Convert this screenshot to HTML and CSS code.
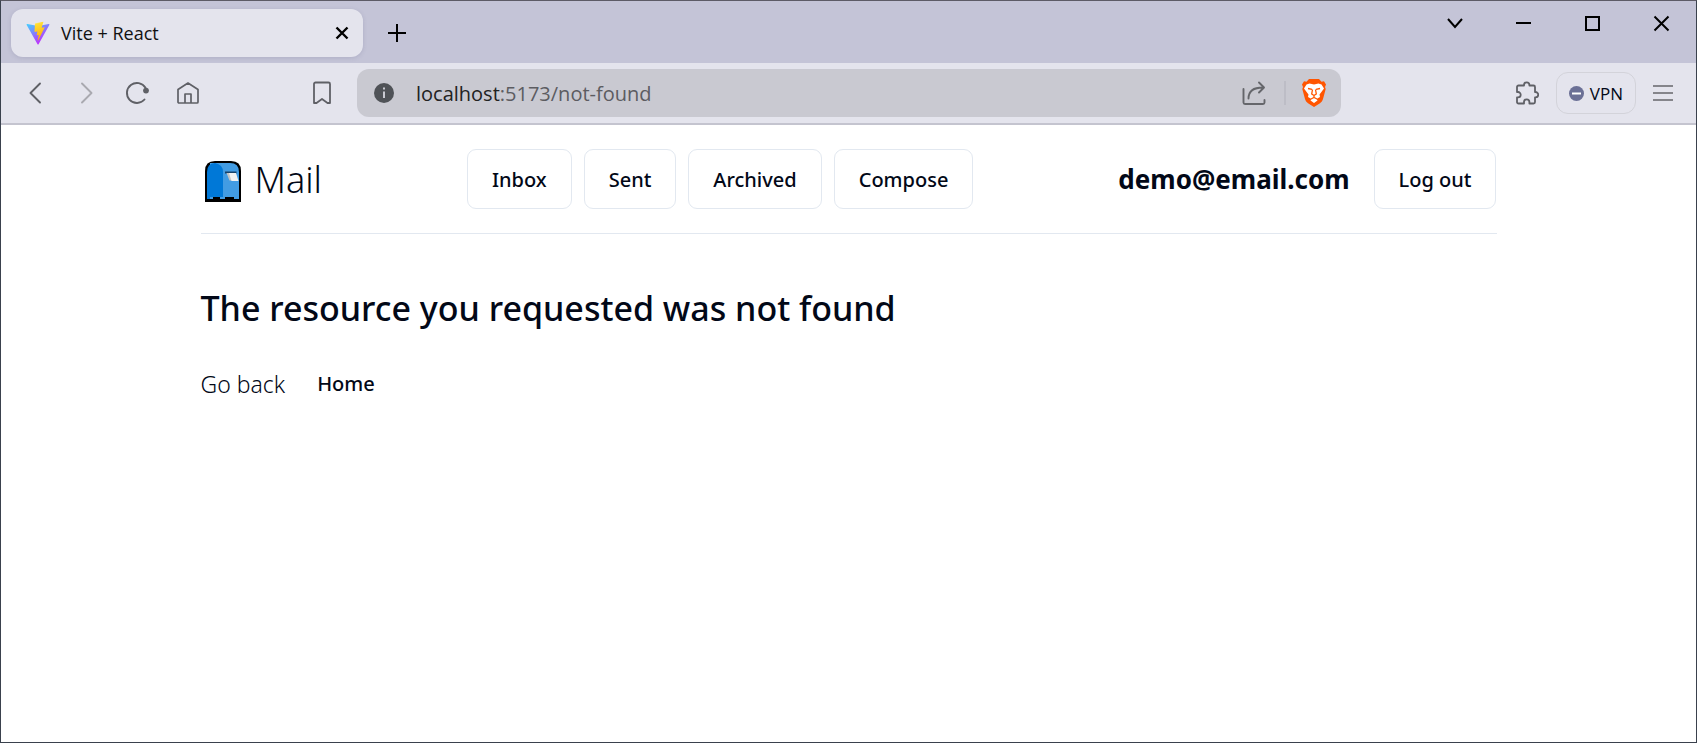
FILE: index.html
```html
<!DOCTYPE html>
<html lang="en">
<head>
<meta charset="utf-8">
<title>Vite + React</title>
<link rel="stylesheet" href="styles.css">
</head>
<body>
<div class="window">
  <div class="tabstrip">
    <div class="tab">
      <svg class="tab-icon" width="26" height="26" viewBox="0 0 32 32" aria-hidden="true">
        <defs>
          <linearGradient id="vite-a" x1="0" y1="0" x2="0.6" y2="0.9"><stop offset="0" stop-color="#41d1ff"/><stop offset="1" stop-color="#bd34fe"/></linearGradient>
          <linearGradient id="vite-b" x1="0.4" y1="0" x2="0.6" y2="1"><stop offset="0" stop-color="#ffea83"/><stop offset="0.1" stop-color="#ffdd35"/><stop offset="1" stop-color="#ffa800"/></linearGradient>
        </defs>
        <path fill="url(#vite-a)" d="M29.9 6.1 16.7 29.7a.7.7 0 0 1-1.3 0L2.1 6.1a.7.7 0 0 1 .8-1.1L16 7.4h.2L29.1 5a.7.7 0 0 1 .8 1.1z"/>
        <path fill="url(#vite-b)" d="M22.3 2 12.6 3.9a.4.4 0 0 0-.3.3l-.6 10.1c0 .2.2.4.4.4l2.7-.6c.3-.1.5.2.4.4l-.8 4c-.1.2.2.5.4.4l1.7-.5c.2-.1.5.1.4.4l-1.3 6.1c-.1.4.4.6.6.3l.1-.2 7.9-15.7c.1-.2-.1-.5-.4-.5l-2.8.6c-.2 0-.4-.2-.4-.5l2-6.3c0-.3-.2-.5-.5-.5z"/>
      </svg>
      <span class="tab-title">Vite + React</span>
      <button class="chrome-btn" type="button" aria-label="Close tab">
        <svg width="14" height="14" viewBox="0 0 14 14" fill="none" stroke="#000" stroke-width="2.4"><path d="M1.5 1.5l11 11M12.5 1.5l-11 11"/></svg>
      </button>
    </div>
    <button class="chrome-btn new-tab" type="button" aria-label="New tab">
      <svg width="20" height="20" viewBox="0 0 20 20" fill="none" stroke="#000" stroke-width="2"><path d="M10 1v18M1 10h18"/></svg>
    </button>
    <div class="window-controls">
      <button class="chrome-btn" type="button" aria-label="Search tabs"><svg width="17" height="17" viewBox="0 0 17 17" fill="none" stroke="#000" stroke-width="2"><path d="M2 4l7 8 7-8"/></svg></button>
      <button class="chrome-btn" type="button" aria-label="Minimize"><svg width="17" height="17" viewBox="0 0 17 17" fill="none" stroke="#000" stroke-width="2"><path d="M1 8h15"/></svg></button>
      <button class="chrome-btn" type="button" aria-label="Maximize"><svg width="17" height="17" viewBox="0 0 17 17" fill="none" stroke="#000" stroke-width="2"><path d="M2 2h13v13H2z"/></svg></button>
      <button class="chrome-btn" type="button" aria-label="Close window"><svg width="17" height="17" viewBox="0 0 17 17" fill="none" stroke="#000" stroke-width="2"><path d="M1.500 1.500l14 14M15.500 1.500l-14 14"/></svg></button>
    </div>
  </div>

  <div class="toolbar">
    <div class="nav-buttons">
      <button class="chrome-btn" type="button" aria-label="Back"><svg width="24" height="24" viewBox="0 0 24 24" fill="none" stroke="#5f6066" stroke-width="1.900" stroke-linecap="round" stroke-linejoin="round"><path d="M17 2.500L7.500 12l9.500 9.500"/></svg></button>
      <button class="chrome-btn" type="button" aria-label="Forward"><svg width="24" height="24" viewBox="0 0 24 24" fill="none" stroke="#a9a9b0" stroke-width="1.900" stroke-linecap="round" stroke-linejoin="round"><path d="M8 2.500l9.500 9.500L8 21.500"/></svg></button>
      <button class="chrome-btn" type="button" aria-label="Reload"><svg width="24" height="24" viewBox="0 0 24 24" fill="none" stroke="#5f6066" stroke-width="1.900" stroke-linecap="round"><path d="M20.500 6.800A10 10 0 1 0 19.500 18.500"/><circle cx="21" cy="9.600" r="2.900" fill="#5f6066" stroke="none"/></svg></button>
      <button class="chrome-btn" type="button" aria-label="Home"><svg width="24" height="24" viewBox="0 0 24 24" fill="none" stroke="#5f6066" stroke-width="1.700" stroke-linejoin="round"><path d="M2 8.500L12 2l10 6.500V21a1 1 0 0 1-1 1H3a1 1 0 0 1-1-1zM9 22v-9h6v9"/></svg></button>
    </div>
    <button class="chrome-btn bookmark" type="button" aria-label="Bookmark"><svg width="24" height="24" viewBox="0 0 24 24" fill="none" stroke="#5f6066" stroke-width="1.800" stroke-linejoin="round"><path d="M4 3a1.500 1.500 0 0 1 1.500-1.500h13A1.500 1.500 0 0 1 20 3v19h-2.500L12 18l-5.500 4H4z"/></svg></button>
    <div class="address">
      <svg width="20" height="20" viewBox="0 0 20 20" aria-hidden="true"><circle cx="10" cy="10" r="10" fill="#4f5257"/><path d="M9 4.500h2v2H9zM9 8.500h2V15H9z" fill="#c9c9d1"/></svg>
      <span class="url">localhost<span class="url-path">:5173/not-found</span></span>
      <button class="chrome-btn" type="button" aria-label="Share"><svg width="24" height="24" viewBox="0 0 24 24" fill="none" stroke="#65666b" stroke-width="1.900" stroke-linecap="round" stroke-linejoin="round"><path d="M1.500 8v13.500A1.500 1.500 0 0 0 3 23h18a1.500 1.500 0 0 0 1.500-1.500V19M6.500 17.500C6.500 10 11 6.500 21 6.500M17 1.500l5 5-5 5"/></svg></button>
      <span class="divider"></span>
      <button class="chrome-btn" type="button" aria-label="Brave Shields"><svg width="26" height="28" viewBox="0 0 26 28"><path fill="#ff5500" d="M8 0h10l2.500 2.700 2.500-.5 2 3.300-1 2.500.7 2L22 20c-.6 2-1.500 3-3 4.200L13 28l-6-3.800C5.500 23 4.600 22 4 20L1.300 10 2 8 1 5.500l2-3.300 2.500.5z"/><path fill="#fff" d="M8.500 4.500l4.500 1 4.500-1 3 1 2.500 4-4.500 6 .5 2.500-3.500 2 1 1.500L13 24l-3.500-2.500 1-1.500L7 18l.5-2.500-4.500-6 2.500-4z"/><path fill="none" stroke="#ff5500" stroke-width="1.300" d="M7 9.500l4 .8M19 9.500l-4 .8M11.500 10.500l-.8 4.500L13 16.500l2.300-1.500-.8-4.500M13 16.500V18M10 20l3-1.500 3 1.500"/></svg></button>
    </div>
    <div class="tools">
      <button class="chrome-btn" type="button" aria-label="Extensions"><svg width="24" height="24" viewBox="0 0 24 24" fill="none" stroke="#5f6066" stroke-width="1.800" stroke-linejoin="round"><path d="M2 6a1.500 1.500 0 0 1 1.500-1.500H9V4a2.700 2.700 0 0 1 5.400 0v.5h4.100A1.500 1.500 0 0 1 20 6v5h.5a2.700 2.700 0 0 1 0 5.400H20v4.600a1.500 1.500 0 0 1-1.500 1.500H14.400V21a2.700 2.700 0 0 0-5.400 0v1.500H3.500A1.500 1.500 0 0 1 2 21v-4.600h1A2.700 2.700 0 0 0 3 11H2z"/></svg></button>
      <button class="vpn" type="button"><svg width="15" height="15" viewBox="0 0 15 15" aria-hidden="true"><circle cx="7.500" cy="7.500" r="7.500" fill="#6b7096"/><path d="M3 6.500h9v2H3z" fill="#fff"/></svg>VPN</button>
      <button class="chrome-btn" type="button" aria-label="Menu"><svg width="20" height="20" viewBox="0 0 20 20" fill="none" stroke="#65666b" stroke-width="1.700"><path d="M0 3h20M0 10h20M0 17h20"/></svg></button>
    </div>
  </div>

  <div class="page">
    <header class="site-header">
      <a class="brand" href="#">
        <svg width="44" height="46" viewBox="0 0 44 46" aria-hidden="true">
          <path fill="#000" d="M4 46V15Q4 5 14 5h16q10 0 10 10v31z"/>
          <path fill="#429ce3" d="M9 43V7h20q9 0 9 9v27h-5v-2h-9v2h-5v-2h-7v2z"/>
          <path fill="#0078d7" d="M6 43V16q0-8.500 8-9 8 1.500 8 9v25H9v2z"/>
          <path fill="#16436b" d="M24 15.500h11.500v2H24z"/>
          <path fill="#c4c4c4" d="M25.500 17l3 7.500h4L30 17z"/>
          <path fill="#f2f2f2" d="M28 17h7l2.500 8h-7z"/>
        </svg>
        Mail
      </a>
      <nav class="menu">
        <a class="button" href="#">Inbox</a>
        <a class="button" href="#">Sent</a>
        <a class="button" href="#">Archived</a>
        <a class="button" href="#">Compose</a>
      </nav>
      <div class="account">
        <span class="email">demo@email.com</span>
        <button class="button" type="button">Log out</button>
      </div>
    </header>
    <main class="content">
      <h1>The resource you requested was not found</h1>
      <p class="links"><span>Go back</span><a href="#">Home</a></p>
    </main>
  </div>
</div>
</body>
</html>
```
FILE: styles.css
```css
* { box-sizing: border-box; }

body {
  margin: 0;
  font-family: "Noto Sans", "Open Sans", sans-serif;
  color: #020817;
  background: #fff;
}

button { font: inherit; color: inherit; cursor: pointer; }
a { color: inherit; text-decoration: none; }
svg { display: block; flex: none; }

.window {
  min-height: 100vh;
  border: 1px solid #3a414d;
  border-top-color: #5d5b66;
}

.chrome-btn {
  display: flex;
  padding: 0;
  border: 0;
  background: none;
}

/* Browser chrome */
.tabstrip,
.toolbar {
  font-family: "Open Sans", "Noto Sans", sans-serif;
}

.tabstrip {
  display: flex;
  align-items: flex-start;
  height: 62px;
  padding: 8px 26px 0 10px;
  background: #c4c4d7;
}

.tab {
  display: flex;
  align-items: center;
  width: 352px;
  height: 48px;
  padding: 0 14px;
  border-radius: 12px;
  background: #e4e4ed;
  box-shadow: 0 1px 4px rgba(90, 90, 130, 0.2);
}

.tab-title {
  flex: 1;
  margin-left: 10px;
  font-size: 18px;
  color: #111;
}

.new-tab { margin: 14px 0 0 24px; }

.window-controls {
  display: flex;
  gap: 52px;
  margin: 6px 0 0 auto;
}

.toolbar {
  display: flex;
  align-items: center;
  height: 62px;
  padding: 0 23px 0 22px;
  border-bottom: 2px solid #c4c4cf;
  background: #e4e4ed;
}

.nav-buttons { display: flex; gap: 27px; }
.bookmark { margin-left: 110px; }

.address {
  display: flex;
  align-items: center;
  flex: 1;
  height: 48px;
  margin: 0 174px 0 23px;
  padding: 0 14px 0 17px;
  border-radius: 12px;
  background: #c9c9d1;
}

.url {
  flex: 1;
  margin-left: 22px;
  font-size: 20px;
  color: #222;
}

.url-path { color: #5c5c61; }

.divider {
  width: 2px;
  height: 24px;
  margin: 0 15px 0 18px;
  background: #bdbdc6;
}

.tools { display: flex; align-items: center; gap: 17px; }

.vpn {
  display: flex;
  align-items: center;
  gap: 6px;
  height: 42px;
  padding: 0 12px;
  border: 1px solid #d3d3da;
  border-radius: 12px;
  background: none;
  font-size: 17px;
}

/* Mail application */
.page {
  max-width: 1296px;
  margin: 0 auto;
}

.site-header {
  display: flex;
  align-items: center;
  justify-content: space-between;
  padding: 24px 0;
  border-bottom: 1px solid #e2e8f0;
}

.brand {
  display: flex;
  align-items: center;
  gap: 10px;
  font-size: 36px;
  font-weight: 300;
}

.menu { display: flex; gap: 12px; }

.button {
  display: flex;
  align-items: center;
  height: 60px;
  padding: 0 24px;
  border: 1px solid #e2e8f0;
  border-radius: 9px;
  background: #fff;
  font-size: 20px;
  font-weight: 500;
}

.account { display: flex; align-items: center; gap: 24px; }
.email { font-size: 26px; font-weight: 700; }

.content { padding: 48px 0; }

h1 {
  margin: 0;
  font-size: 34px;
  font-weight: 500;
  line-height: 52px;
}

.links {
  display: flex;
  align-items: center;
  gap: 32px;
  margin: 32px 0 0;
  font-size: 23px;
  font-weight: 300;
  line-height: 36px;
}

.links a { font-size: 20px; font-weight: 500; }
```
